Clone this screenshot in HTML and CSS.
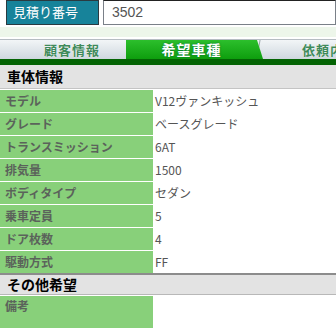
FILE: index.html
```html
<!DOCTYPE html>
<html lang="ja">
<head>
<meta charset="utf-8">
<link rel="stylesheet" href="styles.css">
</head>
<body>
<div class="top">
  <div class="num-label">見積り番号</div>
  <div class="num-input">3502</div>
</div>
<div class="strip"></div>
<div class="tabs">
  <div class="tab tab-first">顧客情報</div>
  <div class="tab tab-active">希望車種</div>
  <div class="tab tab-next">依頼内容</div>
</div>
<div class="bar"></div>
<div class="section">車体情報</div>
<div class="rows">
  <div class="row"><div class="key">モデル</div><div class="val">V12ヴァンキッシュ</div></div>
  <div class="row"><div class="key">グレード</div><div class="val">ベースグレード</div></div>
  <div class="row"><div class="key">トランスミッション</div><div class="val">6AT</div></div>
  <div class="row"><div class="key">排気量</div><div class="val">1500</div></div>
  <div class="row"><div class="key">ボディタイプ</div><div class="val">セダン</div></div>
  <div class="row"><div class="key">乗車定員</div><div class="val">5</div></div>
  <div class="row"><div class="key">ドア枚数</div><div class="val">4</div></div>
  <div class="row"><div class="key">駆動方式</div><div class="val">FF</div></div>
</div>
<div class="section section-other">その他希望</div>
<div class="rows">
  <div class="row row-tall"><div class="key">備考</div><div class="val"></div></div>
</div>
</body>
</html>
```
FILE: styles.css
```css
html, body {
  margin: 0;
  padding: 0;
  background: #fff;
  overflow: hidden;
}
body {
  width: 336px;
  height: 328px;
  font-family: "Noto Sans CJK JP", "Liberation Sans", sans-serif;
}
.top {
  display: flex;
  height: 25px;
  padding-left: 6px;
  gap: 4px;
}
.num-label {
  box-sizing: border-box;
  width: 93px;
  height: 25px;
  background: #17839a;
  border: 1px solid #2a3a40;
  color: #fff;
  font-size: 13px;
  line-height: 22px;
  padding-left: 6px;
}
.num-input {
  box-sizing: border-box;
  flex: 1;
  height: 25px;
  border: 1px solid #7a8088;
  border-top-color: #222;
  color: #555;
  font-family: "Liberation Sans", sans-serif;
  font-size: 14px;
  line-height: 22px;
  padding-left: 8px;
}
.strip {
  margin-top: 2px;
  height: 10px;
  background: #edf6ea;
}
.tabs {
  margin-top: 2px;
  display: flex;
  height: 20px;
  box-sizing: border-box;
  border-top: 1px solid #b5bcc2;
  background: linear-gradient(#f2f5f7, #cfd8df);
  overflow: hidden;
}
.tab {
  flex-shrink: 0;
  font-size: 13px;
  font-weight: bold;
  line-height: 19px;
  letter-spacing: 1px;
  white-space: nowrap;
}
.tab-first {
  width: 127px;
  box-sizing: border-box;
  padding-left: 44px;
  color: #3f8a5a;
  text-shadow: 0 0 1px #fff;
  border-right: 1px solid #a8b0b8;
}
.tab-active {
  width: 137px;
  margin-left: -1px;
  text-align: center;
  padding-right: 6px;
  box-sizing: border-box;
  color: #fff;
  font-size: 14px;
  background: linear-gradient(#2cbf2c, #0e9e0e);
  clip-path: polygon(0 0, 131px 0, 100% 100%, 0 100%);
  text-shadow: 0 0 2px #063;
}
.tab-next {
  padding-left: 45px;
  color: #3f8a5a;
  text-shadow: 0 0 1px #fff;
  background: linear-gradient(100deg, transparent 0, transparent 2px, #9aa3aa 3px, transparent 4px);
  margin-left: -6px;
}
.bar {
  height: 6px;
  background: #046404;
}
.section {
  box-sizing: border-box;
  height: 24px;
  background: #e3e3e3;
  border-bottom: 1px solid #c4c4c4;
  font-size: 14px;
  font-weight: bold;
  line-height: 23px;
  padding-left: 7px;
  color: #000;
}
.section-other {
  height: 22px;
  border-top: 2px solid #8c8c8c;
  border-bottom: 1px solid #b8b8b8;
  line-height: 19px;
}
.rows {
  display: flex;
  flex-direction: column;
}
.row {
  display: flex;
  height: 23px;
  box-sizing: border-box;
  border-top: 1px solid #fff;
}
.key {
  width: 153px;
  background: #88d07a;
  color: #5b635b;
  font-size: 12px;
  font-weight: bold;
  line-height: 22px;
  padding-left: 5px;
  box-sizing: border-box;
}
.val {
  flex: 1;
  color: #555;
  font-size: 12px;
  line-height: 22px;
  padding-left: 2px;
}
.row-tall {
  height: 40px;
}
.row-tall .key {
  line-height: 20px;
}
```
